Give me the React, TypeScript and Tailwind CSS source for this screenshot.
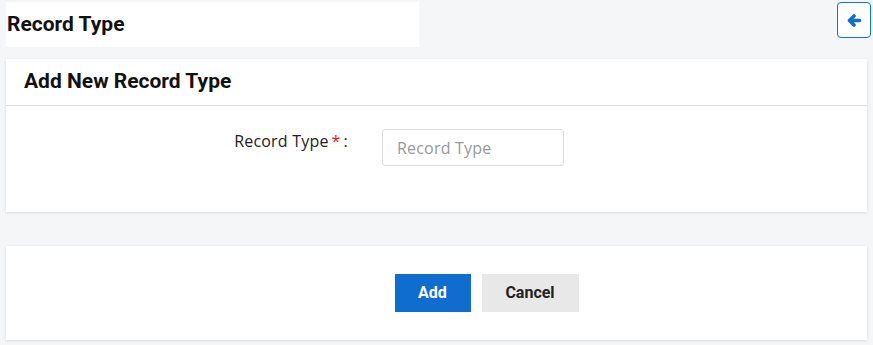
export default function App() {
  return (
    <div className="min-h-screen w-full bg-[#f5f6f8] px-[6px] pt-[2px] font-['Roboto',sans-serif]">
      <div className="flex items-start justify-between">
        <div className="flex h-[45px] w-[413px] items-center bg-white">
          <h1 className="pl-[1px] text-[21px] font-bold text-[#111]">Record Type</h1>
        </div>
        <button className="-mr-[4px] flex h-[36px] w-[34px] items-center justify-center rounded-[4px] border border-[#0d6efd] bg-white text-[#0d6ecf]">
          <svg width="15" height="13" viewBox="0 0 15 13" fill="none">
            <path
              d="M7 2 L2.5 6.5 L7 11 M3.5 6.5 H12.5"
              stroke="currentColor"
              strokeWidth="3.6"
              strokeLinecap="round"
              strokeLinejoin="round"
            />
          </svg>
        </button>
      </div>

      <div className="mt-[12px] bg-white shadow-[0_1px_3px_rgba(0,0,0,0.12)]">
        <div className="flex h-[47px] items-center border-b border-[#dedede] px-[18px]">
          <h2 className="text-[21px] font-bold text-[#111]">Add New Record Type</h2>
        </div>
        <div className="flex items-start pt-[23px] pb-[46px]">
          <label className="w-[342px] text-right font-['Open_Sans',sans-serif] text-[16px] tracking-[0.2px] text-[#222]">
            Record Type<span className="ml-[3px] text-[#e11]">*</span>
            <span className="ml-[3px]">:</span>
          </label>
          <input
            placeholder="Record Type"
            className="ml-[34px] h-[37px] w-[182px] rounded-[3px] border border-[#dcdcdc] px-[14px] font-['Open_Sans',sans-serif] text-[16px] tracking-[0.2px] text-[#222] outline-none placeholder:text-[#999]"
          />
        </div>
      </div>

      <div className="mt-[34px] flex h-[94px] items-center justify-center gap-[11px] bg-white pl-[100px] shadow-[0_1px_3px_rgba(0,0,0,0.12)]">
        <button className="h-[38px] w-[76px] bg-[#0f6dcf] text-[16px] font-bold text-white">Add</button>
        <button className="h-[38px] w-[97px] bg-[#e8e8e8] text-[16px] font-bold text-[#222]">Cancel</button>
      </div>
    </div>
  );
}
